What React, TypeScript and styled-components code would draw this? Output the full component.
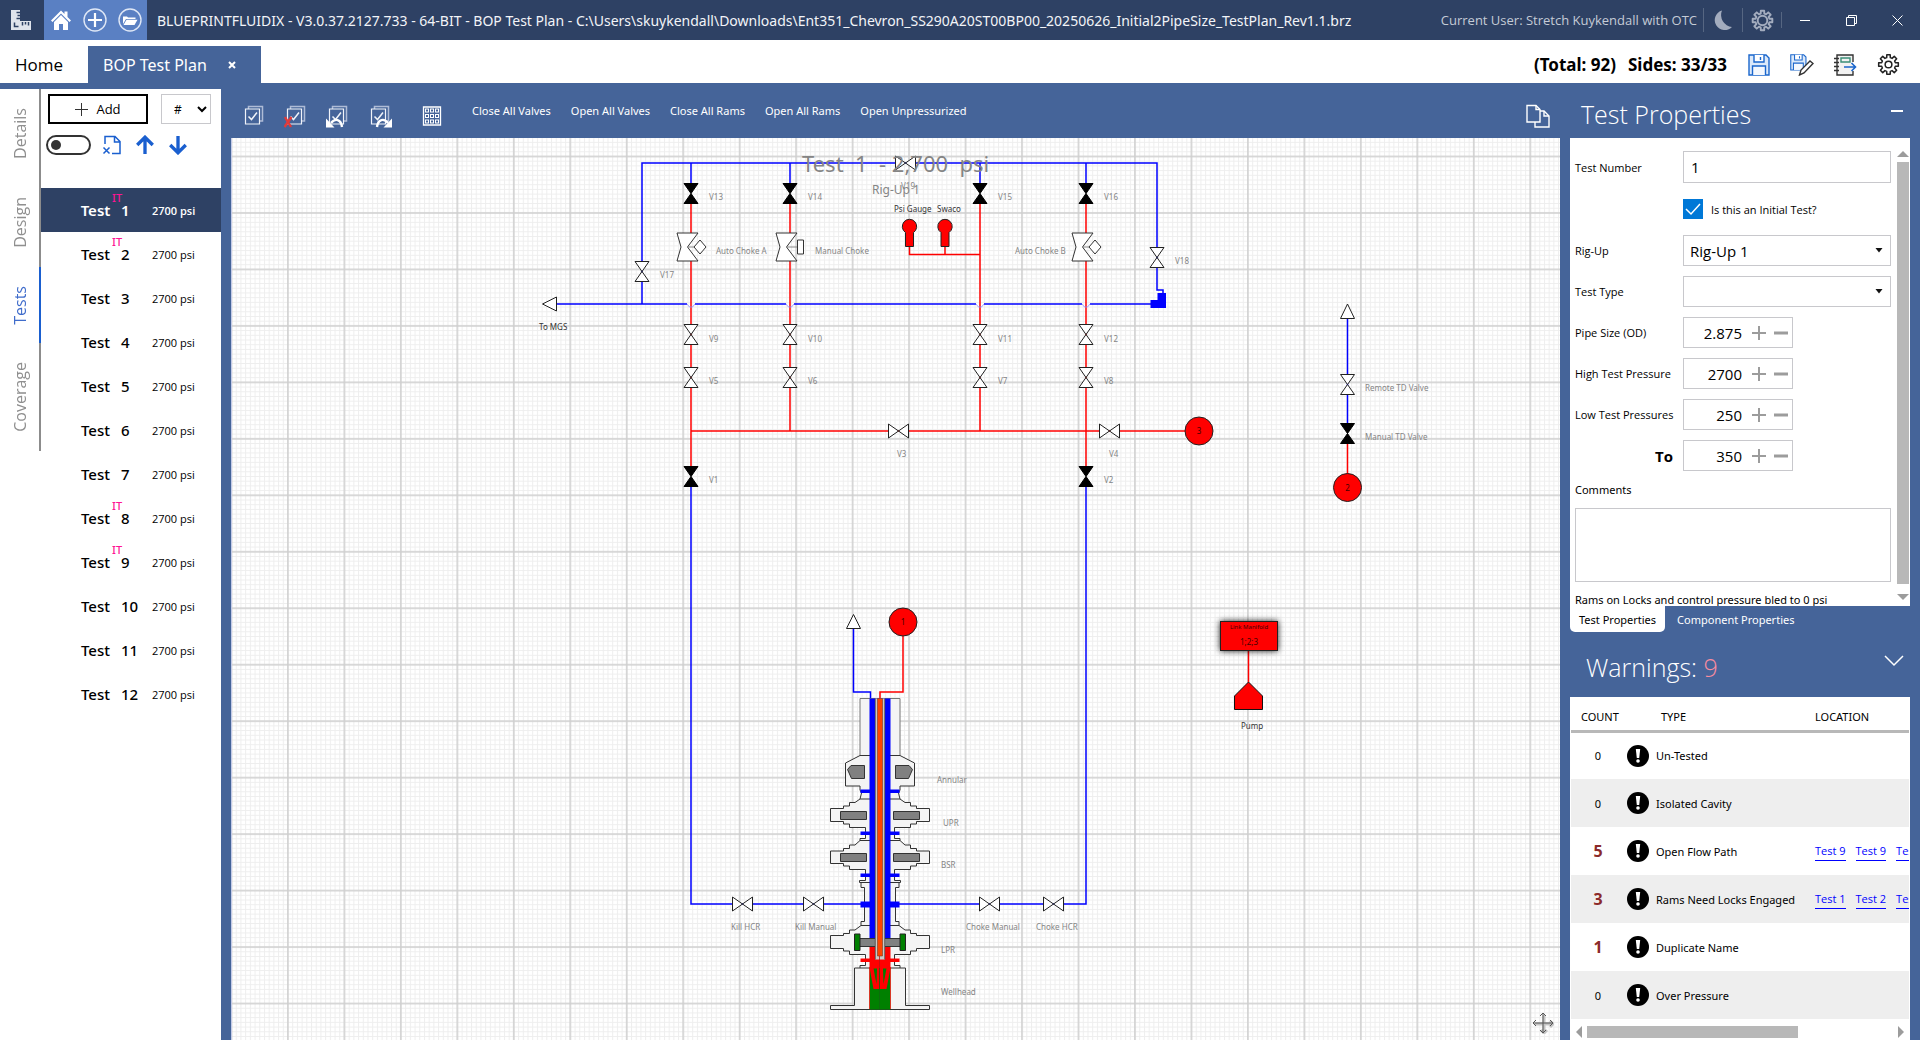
import React, { useState } from "react";
import styled, { createGlobalStyle, css } from "styled-components";

const color = {
  navy: "#2e4164",
  blue: "#456499",
  sky: "#5a80c3",
  action: "#1a5fcf",
  line: "#c8c8cc",
  thumb: "#b8b8b8",
  arrow: "#9c9c9c",
};

const noto = `"Noto Sans", "Open Sans", sans-serif`;

const GlobalStyle = createGlobalStyle`
  * { box-sizing: border-box; }
  body { margin: 0; overflow: hidden; }
  body, button, input, select, textarea {
    font-family: "Open Sans", "Noto Sans", sans-serif;
    font-size: 12px;
    color: #000;
  }
`;

const plainButton = css`
  display: flex;
  align-items: center;
  justify-content: center;
  padding: 0;
  border: 0;
  background: none;
  cursor: pointer;
`;

/* ---------- Shell ---------- */

const Shell = styled.div`
  display: flex;
  flex-direction: column;
  height: 100vh;
  background: ${color.blue};
`;

const TitleBar = styled.header`
  display: flex;
  flex: none;
  align-items: center;
  height: 40px;
  background: ${color.navy};
`;

const Logo = styled.div`
  display: flex;
  width: 44px;
  padding-left: 10px;
`;

const QuickActions = styled.nav`
  display: flex;
  align-items: center;
  justify-content: space-around;
  width: 103px;
  height: 40px;
  background: ${color.sky};
`;

const IconButton = styled.button<{ $size?: number; $wide?: boolean }>`
  ${plainButton}
  width: ${(p) => (p.$wide ? 40 : p.$size ?? 24)}px;
  height: ${(p) => p.$size ?? 24}px;
`;

const WindowTitle = styled.div`
  flex: 1;
  padding-left: 10px;
  color: #f2f4f8;
  font-family: ${noto};
  font-size: 14px;
  white-space: nowrap;
  overflow: hidden;
`;

const UserName = styled.div`
  padding-right: 6px;
  color: #c5cbd6;
  font-size: 13px;
  white-space: nowrap;
`;

const TitleCell = styled.div`
  display: flex;
  justify-content: center;
  width: 39px;
  border-left: 1px solid #566682;
`;

const TitleRule = styled.span`
  width: 1px;
  height: 16px;
  background: #566682;
`;

const WindowButton = styled.button`
  ${plainButton}
  width: 46px;
  height: 40px;
`;

const TabRow = styled.div`
  display: flex;
  flex: none;
  align-items: flex-end;
  height: 43px;
  background: #fff;
`;

const HomeTab = styled.button`
  ${plainButton}
  justify-content: flex-start;
  width: 88px;
  height: 37px;
  padding-left: 15px;
  font-size: 17px;
`;

const PlanTab = styled.div`
  display: flex;
  align-items: center;
  gap: 20px;
  width: 173px;
  height: 37px;
  padding-left: 15px;
  background: ${color.blue};
  color: #fff;
  font-family: ${noto};
  font-size: 16px;
`;

const Totals = styled.div`
  display: flex;
  align-items: center;
  gap: 12px;
  margin-left: auto;
  height: 37px;
  font-family: ${noto};
  font-size: 17px;
  font-weight: 700;
`;

const FileActions = styled.div`
  display: flex;
  align-items: center;
  gap: 19px;
  height: 37px;
  padding: 0 20px;
`;

const Body = styled.div`
  display: flex;
  flex: 1;
  min-height: 0;
`;

/* ---------- Left side ---------- */

const SideNav = styled.nav`
  flex: none;
  width: 41px;
  margin-top: 6px;
  background: #fff;
`;

const NavTab = styled.button<{ $active?: boolean }>`
  ${plainButton}
  width: 41px;
  padding: 19px 0;
  border-right: 2px solid ${(p) => (p.$active ? color.action : "#8c8c8c")};
  color: ${(p) => (p.$active ? "#3f6ccb" : "#8f8f8f")};
  font-size: 16px;
  line-height: 24px;
  writing-mode: vertical-rl;

  span { transform: rotate(180deg); }
`;

const TestPanel = styled.aside`
  flex: none;
  width: 180px;
  margin-top: 6px;
  background: #fff;
`;

const PanelTools = styled.div`
  display: flex;
  align-items: center;
  height: 30px;
  margin: 5px 7px 10px;
  gap: 13px;
`;

const AddButton = styled.button`
  ${plainButton}
  gap: 8px;
  width: 100px;
  height: 30px;
  border: 2px solid #000;
  background: #fff;
  font-size: 13px;
`;

const SelectBox = styled.div<{ $width?: number }>`
  display: flex;
  align-items: center;
  width: ${(p) => (p.$width ? `${p.$width}px` : "100%")};
  height: ${(p) => (p.$width ? 30 : 31)}px;
  border: 1px solid ${color.line};
  background: #fff;

  select {
    flex: 1;
    min-width: 0;
    height: 100%;
    padding: 0 0 0 ${(p) => (p.$width ? 12 : 6)}px;
    border: 0;
    appearance: none;
    background: none;
    font-size: ${(p) => (p.$width ? 12 : 15)}px;
  }

  svg {
    flex: none;
    margin-right: ${(p) => (p.$width ? 3 : 7)}px;
    pointer-events: none;
  }
`;

const PanelIcons = styled.div`
  display: flex;
  align-items: center;
  gap: 9px;
  height: 22px;
  margin: 0 5px 32px;
`;

const Toggle = styled.input`
  appearance: none;
  display: flex;
  align-items: center;
  width: 45px;
  height: 20px;
  margin: 0;
  padding-left: 3px;
  border: 2px solid #333;
  border-radius: 10px;
  background: #fff;

  &::before {
    content: "";
    width: 10px;
    height: 10px;
    border-radius: 50%;
    background: #333;
  }

  &:checked { justify-content: flex-end; padding: 0 3px 0 0; }
`;

const TestList = styled.ul`
  margin: 0;
  padding: 0;
  list-style: none;
`;

const TestItem = styled.button<{ $active: boolean }>`
  ${plainButton}
  justify-content: flex-start;
  width: 180px;
  height: 44px;
  padding-left: 38px;
  background: ${(p) => (p.$active ? color.navy : "#fff")};
  color: ${(p) => (p.$active ? "#fff" : "#000")};
  font-family: ${noto};
  font-weight: ${(p) => (p.$active ? 600 : 500)};
`;

const TestWord = styled.span`
  width: 33px;
  font-size: 15px;
`;

const TestBadge = styled.sup`
  align-self: flex-start;
  width: 9px;
  margin-top: 3px;
  color: #ff1493;
  font-size: 11px;
  font-weight: 500;
  line-height: 14px;
`;

const TestNo = styled.span`
  width: 31px;
  font-size: 15px;
  text-align: left;
`;

const TestPsi = styled.span`
  font-family: "Open Sans", "Noto Sans", sans-serif;
  font-size: 11px;
  white-space: nowrap;
`;

/* ---------- Canvas ---------- */

const Center = styled.main`
  display: flex;
  flex: 1;
  flex-direction: column;
  min-width: 0;
  padding: 0 10px;
`;

const Toolbar = styled.div`
  display: flex;
  flex: none;
  align-items: center;
  gap: 20px;
  height: 55px;
  padding: 0 10px 0 11px;
`;

const ToolIcons = styled.div`
  display: flex;
  gap: 18px;
  padding-top: 10px;
`;

const ToolButton = styled.button`
  ${plainButton}
  height: 24px;
  color: #fff;
  font-family: ${noto};
  font-size: 11px;
  white-space: nowrap;
`;

const ToolEnd = styled.div`
  margin-left: auto;
  padding-top: 10px;
`;

const CanvasArea = styled.section`
  position: relative;
  flex: 1;
  min-height: 0;
  border-left: 1px solid #c3cbe8;
  background: #fff;
  overflow: hidden;
`;

const Drawing = styled.svg`
  display: block;
  width: 100%;
  height: 100%;
  font-family: ${noto};
`;

const PlanTitle = styled.text`
  font-size: 22px;
  font-weight: 400;
  white-space: pre;
`;

const PanHandle = styled.div`
  position: absolute;
  right: 6px;
  bottom: 6px;
  display: flex;
`;

/* ---------- Right side ---------- */

const RightSide = styled.aside`
  display: flex;
  flex: none;
  flex-direction: column;
  width: 350px;
  padding-right: 10px;
`;

const PanelHeading = styled.div<{ $tall?: boolean }>`
  display: flex;
  flex: none;
  align-items: ${(p) => (p.$tall ? "flex-start" : "center")};
  justify-content: space-between;
  height: ${(p) => (p.$tall ? 65 : 55)}px;
  padding: ${(p) => (p.$tall ? "17px 4px 0 16px" : "6px 1px 0 11px")};

  h2 {
    margin: 0;
    color: #fff;
    font-size: 25px;
    font-weight: 300;
    line-height: 36px;
  }

  em {
    color: #f78ca0;
    font-style: normal;
  }
`;

const PropsBox = styled.div`
  display: flex;
  flex: none;
  height: 468px;
  background: #fff;
  overflow: hidden;
`;

const PropsForm = styled.form`
  display: grid;
  flex: 1;
  grid-template-columns: 108px 1fr;
  grid-auto-rows: min-content;
  align-items: center;
  row-gap: 10px;
  padding: 13px 6px 0 5px;
`;

const FieldLabel = styled.label`
  font-size: 11px;
`;

const ToLabel = styled.label`
  padding-right: 10px;
  font-size: 15px;
  font-weight: 700;
  text-align: right;
`;

const TextField = styled.input`
  width: 100%;
  height: 32px;
  padding: 0 7px;
  border: 1px solid ${color.line};
  font-size: 15px;
`;

const CheckLine = styled.div`
  display: flex;
  grid-column: 2;
  align-items: center;
  gap: 8px;
  height: 32px;
`;

const CheckBox = styled.input`
  appearance: none;
  width: 20px;
  height: 20px;
  margin: 0;
  border: 1px solid #0078d7;
  background: #fff;

  &:checked {
    background: #0078d7
      url("data:image/svg+xml,%3Csvg xmlns='http://www.w3.org/2000/svg' viewBox='0 0 18 18'%3E%3Cpath d='M2 9l5 5 9-10' fill='none' stroke='white' stroke-width='1.5'/%3E%3C/svg%3E");
  }
`;

const Spinner = styled.div`
  display: flex;
  align-items: center;
  width: 110px;
  height: 31px;
  border: 1px solid ${color.line};

  input {
    width: 58px;
    height: 100%;
    padding: 0;
    border: 0;
    background: none;
    font-size: 15px;
    text-align: right;
  }

  button {
    ${plainButton}
    width: 22px;
    height: 29px;
  }

  button:first-of-type { margin-left: 6px; }
`;

const Wide = styled.div`
  display: flex;
  flex-direction: column;
  grid-column: 1 / -1;
  gap: 9px;
  font-family: ${noto};
  font-size: 11px;
  line-height: 18px;
`;

const Comments = styled.textarea`
  width: 100%;
  height: 74px;
  border: 1px solid ${color.line};
  resize: none;
`;

const VScroll = styled.div`
  display: flex;
  flex-direction: column;
  align-items: center;
  gap: 5px;
  width: 13px;
  padding: 13px 1px 5px 0;
`;

const VThumb = styled.div`
  width: 12px;
  height: 422px;
  margin-bottom: 5px;
  background: ${color.thumb};
`;

const PageTabs = styled.div`
  display: flex;
  flex: none;
  height: 26px;
`;

const PageTab = styled.button<{ $active?: boolean }>`
  ${plainButton}
  padding: 0 ${(p) => (p.$active ? 9 : 12)}px;
  border-radius: 0 0 5px 5px;
  background: ${(p) => (p.$active ? "#fff" : "none")};
  color: ${(p) => (p.$active ? "#000" : "#fff")};
  font-family: ${noto};
  font-size: 11px;
`;

const WarnBox = styled.div`
  display: flex;
  flex: 1;
  flex-direction: column;
  justify-content: space-between;
  min-height: 0;
  padding: 0 1px;
  background: #fff;
`;

const WarnScroller = styled.div`
  overflow: hidden;
`;

const WarnTable = styled.table`
  width: 420px;
  border-collapse: collapse;
  table-layout: fixed;
  font-family: ${noto};

  thead tr { height: 34px; border-bottom: 3px solid ${color.thumb}; }
  th { padding: 7px 0 0 10px; font-size: 11px; font-weight: 400; text-align: left; }
  th:nth-child(2) { padding-left: 34px; }
  th:nth-child(3) { padding-left: 6px; }
  tbody tr { height: 48px; }
  tbody tr:nth-child(even) { background: #eee; }
  td { padding: 0; font-size: 11px; }
`;

const Count = styled.td<{ $hot: boolean }>`
  && {
    padding-right: 2px;
    text-align: center;
    color: ${(p) => (p.$hot ? "#8b2a2a" : "#000")};
    font-size: ${(p) => (p.$hot ? 16 : 11)}px;
    font-weight: ${(p) => (p.$hot ? 700 : 400)};
  }
`;

const TypeCell = styled.div`
  display: flex;
  align-items: center;
  gap: 7px;
  white-space: nowrap;
`;

const Links = styled.div`
  display: flex;
  gap: 10px;
  padding-left: 6px;

  a {
    border-bottom: 1px solid #0000ff;
    color: #0000ff;
    font-family: "Open Sans", "Noto Sans", sans-serif;
    line-height: 18px;
    text-decoration: none;
    white-space: nowrap;
  }
`;

const HScroll = styled.div`
  display: flex;
  flex: none;
  align-items: center;
  justify-content: space-between;
  height: 16px;
  padding: 0 5px;
`;

const HThumb = styled.div`
  width: 211px;
  height: 12px;
  margin-right: auto;
  margin-left: 5px;
  background: ${color.thumb};
`;

/* ---------- Icons ---------- */

type GearProps = { size: number; stroke: string; width: number; hole: number };

const Gear = ({ size, stroke, width, hole }: GearProps) => {
  const points: string[] = [];
  for (let i = 0; i < 8; i++) {
    const steps: [number, number][] = [[-0.26, 7.4], [-0.17, 10.4], [0.17, 10.4], [0.26, 7.4]];
    steps.forEach(([offset, radius]) => {
      const angle = (i * Math.PI) / 4 + offset;
      points.push(`${(12 + radius * Math.sin(angle)).toFixed(2)},${(12 - radius * Math.cos(angle)).toFixed(2)}`);
    });
  }
  return (
    <svg width={size} height={size} viewBox="0 0 24 24" fill="none" stroke={stroke} strokeWidth={width} strokeLinejoin="round">
      <polygon points={points.join(" ")} />
      <circle cx="12" cy="12" r={hole} />
    </svg>
  );
};

const LogoIcon = () => (
  <svg width="22" height="22" viewBox="0 0 22 22">
    <path d="M1 1h9v11h11v9H1z" fill="#dfe3ec" />
    <path d="M10 3.500H6.500M10 6.500H7.500M10 9.500H6.500M12.500 13v3.500M15.500 13v2.500M18.500 13v3.500M4.500 13.500v4h4" stroke={color.navy} strokeWidth="1.500" fill="none" />
  </svg>
);

const HomeIcon = () => (
  <svg width="22" height="22" viewBox="0 0 22 22">
    <path d="M1 11.500L11 1.500l3.500 3.500V2.500h3V8l3.500 3.500-1.500 1.500L11 4.600 2.500 13z" fill="#fff" />
    <path d="M4 13l7-7 7 7v8h-5v-6H9v6H4z" fill="#fff" />
  </svg>
);

const PlusCircle = () => (
  <svg width="26" height="26" viewBox="0 0 26 26" fill="none" stroke="#fff">
    <circle cx="13" cy="13" r="11" strokeWidth="1.400" stroke="#dfe7f6" />
    <path d="M13 6v14M6 13h14" strokeWidth="2.200" />
  </svg>
);

const FolderCircle = () => (
  <svg width="26" height="26" viewBox="0 0 26 26">
    <circle cx="13" cy="13" r="11" fill="none" strokeWidth="1.400" stroke="#dfe7f6" />
    <path d="M6 17V9.500h4l1 1h7.500v1.500H9z" fill="#fff" />
    <path d="M9.500 12.800h11L17.500 18h-11z" fill="#fff" />
  </svg>
);

const MoonIcon = () => (
  <svg width="20" height="22" viewBox="0 0 20 22">
    <path d="M9 1.500a10 10 0 1 0 10 16.500A12 12 0 0 1 9 1.500z" fill="#a3acbe" />
  </svg>
);

const SaveShape = () => (
  <g fill="#dbe9fa" stroke="#1a66cc" strokeWidth="1.400">
    <path d="M1 1h17l3 3v17H1z" />
    <path d="M6 1v7h10V1M12.500 3v3" fill="#fff" />
    <path d="M4.500 21v-9h13v9" fill="#f4f8fe" />
  </g>
);

const SaveIcon = () => (
  <svg width="22" height="22" viewBox="0 0 22 22"><SaveShape /></svg>
);

const SaveAsIcon = () => (
  <svg width="24" height="22" viewBox="0 0 24 22">
    <g transform="scale(.76)"><SaveShape /></g>
    <path d="M9.500 21l1.500-5L20 7l3 2.500-9 9.500z" fill="#fff" stroke="#333" strokeWidth="1.400" />
  </svg>
);

const ReportIcon = () => (
  <svg width="24" height="22" viewBox="0 0 24 22" fill="none" strokeWidth="1.400">
    <path d="M20 8V1H4v20h16v-4" fill="#f2f2f2" stroke="#333" />
    <path d="M1 4.500h5M1 8.500h5M1 12.500h5M1 16.500h5" stroke="#333" />
    <path d="M8 4h9v4H8z" stroke="#3b8f78" />
    <path d="M11 13h11M18.500 9l4 4-4 4" stroke="#1a66cc" strokeWidth="1.600" />
  </svg>
);

const DocRemove = () => (
  <svg width="20" height="20" viewBox="0 0 20 20" fill="none" stroke={color.action} strokeWidth="1.500">
    <path d="M3 9V1.500h10l5 5V18.500h-8M12.500 1.500V7H18" />
    <path d="M1.500 12.500l6 6M7.500 12.500l-6 6" />
  </svg>
);

const ArrowIcon = ({ down }: { down?: boolean }) => (
  <svg width="20" height="20" viewBox="0 0 18 18">
    <path d="M9 17V3M2 9l7-7 7 7" transform={down ? "rotate(180 9 9)" : undefined} fill="none" stroke={color.action} strokeWidth="3" />
  </svg>
);

const Checks = ({ mark }: { mark?: "clear" | "undo" | "redo" }) => (
  <svg width="24" height="24" viewBox="0 0 24 24" fill="none" stroke="#f0f3f9" strokeWidth="1.200">
    <path d="M6.500 5V2.500H20.500V17H18" stroke="#aebbd6" strokeWidth="1.500" />
    <path d="M3.500 5h14v15h-14z" />
    <path d="M6.500 12.500l3 3 5.500-7" strokeWidth="1.500" />
    {mark === "clear" && <path d="M1 13l6 10M7.500 13L.500 23" stroke="#e03a3a" strokeWidth="2.400" />}
    {mark === "undo" && (
      <g>
        <path d="M5 19c4-5 10-4 11 4" strokeWidth="2.400" stroke="#fff" />
        <path d="M0 14.500v9h8.500z" fill="#fff" stroke="none" />
      </g>
    )}
    {mark === "redo" && (
      <g>
        <path d="M9 23c1-8 7-9 11-4" strokeWidth="2.400" stroke="#fff" />
        <path d="M24 14.500v9h-8.500z" fill="#fff" stroke="none" />
      </g>
    )}
  </svg>
);

const GridIcon = () => (
  <svg width="24" height="24" viewBox="0 0 24 24" fill="none" stroke="#fff">
    <path d="M3.500 3h17v18h-17z" strokeWidth="1.300" />
    {[5.5, 10.5, 15.5].map((x) => [5, 10.5, 16].map((y) => (
      <rect key={`${x}-${y}`} x={x} y={y} width="3" height="3" strokeWidth="1" />
    )))}
  </svg>
);

const CopyIcon = () => (
  <svg width="24" height="24" viewBox="0 0 24 24" fill={color.blue} stroke="#fff" strokeWidth="1.400">
    <path d="M9 7h9l5 5v11H9z" />
    <path d="M18 7v5h5" fill="none" />
    <path d="M1 1.500h9l4 4V18H1z" />
    <path d="M10 1.500v4h4" fill="none" />
  </svg>
);

const Caret = () => (
  <svg width="8" height="5" viewBox="0 0 8 5"><path d="M.500 0h7L4 4.500z" fill="#111" /></svg>
);

const Chevron = () => (
  <svg width="10" height="7" viewBox="0 0 10 7"><path d="M1 1l4 4 4-4" fill="none" stroke="#000" strokeWidth="2" /></svg>
);

const AlertIcon = () => (
  <svg width="22" height="22" viewBox="0 0 22 22">
    <circle cx="11" cy="11" r="11" />
    <path d="M8.800 4h4.400l-1 9H9.800z" fill="#fff" />
    <circle cx="11" cy="16" r="1.800" fill="#fff" />
  </svg>
);

const Plus = () => (
  <svg width="14" height="14" viewBox="0 0 14 14"><path d="M7 0v14M0 7h14" stroke={color.arrow} strokeWidth="2" /></svg>
);

const Minus = () => (
  <svg width="14" height="14" viewBox="0 0 14 14"><path d="M0 7h14" stroke={color.arrow} strokeWidth="3" /></svg>
);

const Triangle = ({ dir }: { dir: "up" | "down" | "left" | "right" }) => {
  const turn = { up: 0, right: 90, down: 180, left: 270 }[dir];
  const box = { up: "0 3 12 6", down: "0 3 12 6", left: "3 0 6 12", right: "3 0 6 12" }[dir];
  const flat = dir === "up" || dir === "down";
  return (
    <svg width={flat ? 12 : 6} height={flat ? 6 : 12} viewBox={box}>
      <path d="M0 9h12L6 3z" transform={`rotate(${turn} 6 6)`} fill={color.arrow} />
    </svg>
  );
};

/* ---------- Plan drawing ---------- */

const RED = "#ff0000";
const BLUE = "#0000ff";
const MAJOR = 56.47;
const MINOR = MAJOR / 12;

type ValveProps = { x: number; y: number; closed?: boolean; flat?: boolean };

const Valve = ({ x, y, closed, flat }: ValveProps) => (
  <path
    d="M-7-10H7L-7 10H7z"
    transform={`translate(${x} ${y})${flat ? " rotate(90)" : ""}`}
    fill={closed ? "#000" : "#fff"}
    stroke={closed ? "#000" : "#222"}
    strokeWidth="1"
    strokeLinejoin="round"
  />
);

const Choke = ({ x, manual }: { x: number; manual?: boolean }) => (
  <g transform={`translate(${x} 247)`} fill="#fff" stroke="#333" strokeWidth="1">
    <path d="M-14-14H7L-3.500 0 7 14H-14L-10 0z" />
    <path d={manual ? "M-3.500 0H7" : "M-3.500 0H3"} stroke="#888" />
    <path d={manual ? "M7.500-7h6V7h-6z" : "M3 0l6-7 6 7-6 7z"} />
  </g>
);

const Gauge = ({ x }: { x: number }) => (
  <path d={`M${x - 4} 246.500v-14a7.200 7.200 0 1 1 8 0v14z`} fill={RED} stroke="#222" strokeWidth="1" />
);

const Port = ({ x, y, n }: { x: number; y: number; n: number }) => (
  <g>
    <circle cx={x} cy={y} r="14" fill={RED} stroke="#222" />
    <text x={x} y={y + 3} fontSize="8" textAnchor="middle" fill="#400">{n}</text>
  </g>
);

const valves: ValveProps[] = [
  ...[691, 790, 980, 1086].flatMap((x) => [
    { x, y: 193.5, closed: true },
    { x, y: 334.5 },
    { x, y: 377.5 },
  ]),
  { x: 642, y: 271.5 },
  { x: 1157, y: 257.5 },
  { x: 691, y: 476.5, closed: true },
  { x: 1086, y: 476.5, closed: true },
  { x: 898.5, y: 431, flat: true },
  { x: 1109.5, y: 431, flat: true },
  { x: 905.5, y: 163, flat: true },
  { x: 1347.5, y: 384.5 },
  { x: 1347.5, y: 433.5, closed: true },
  { x: 742.5, y: 904, flat: true },
  { x: 813.5, y: 904, flat: true },
  { x: 989.5, y: 904, flat: true },
  { x: 1053.5, y: 904, flat: true },
];

type Mark = [string, number, number];

const marks: Mark[] = [
  ["V13", 709, 200], ["V14", 808, 200], ["V15", 998, 200], ["V16", 1104, 200],
  ["V9", 709, 342], ["V10", 808, 342], ["V11", 998, 342], ["V12", 1104, 342],
  ["V5", 709, 384], ["V6", 808, 384], ["V7", 998, 384], ["V8", 1104, 384],
  ["V17", 660, 278], ["V18", 1175, 264], ["V19", 901, 189],
  ["V1", 709, 483], ["V2", 1104, 483], ["V3", 897, 457], ["V4", 1109, 457],
  ["Auto Choke A", 716, 254], ["Manual Choke", 815, 254], ["Auto Choke B", 1015, 254],
  ["Remote TD Valve", 1365, 391], ["Manual TD Valve", 1365, 440],
  ["Kill HCR", 731, 930], ["Kill Manual", 795, 930], ["Choke Manual", 966, 930], ["Choke HCR", 1036, 930],
  ["Annular", 937, 783], ["UPR", 943, 826], ["BSR", 941, 868], ["LPR", 941, 953], ["Wellhead", 941, 995],
];

const darkMarks: Mark[] = [
  ["To MGS", 539, 330], ["Psi Gauge", 894, 212], ["Swaco", 937, 212], ["Pump", 1241, 729],
];

/* Left half of the stack; the right half is its mirror image about x = 880. */
const StackHalf = () => (
  <g>
    <g fill="#f4f4f4" stroke="#333" strokeWidth="1">
      <path d="M880 698.500H860V755.500H880z" stroke="#777" />
      <path d="M880 755.500H860L845.500 763V786H860V790L861.500 793 860 799 855 802.500H849.500V806H843.500V808.500H830.500V821.500H843.500V824H849.500V827.500H865.500V838.500H860V840.500L855 845H849.500V848.500H843.500V851H830.500V863.500H843.500V866H849.500V869.500H865.500V880.500H859.500V882.500H861V887.500H864.500V921.500H861V925.500L855 930H849.500V933.500H843.500V935.500H830.500V948.500H843.500V951H849.500V954.500H865.500V965.500H860V968H854.500V1005.500H830.500V1009.500H880z" />
      <path d="M860 799H870M860 840.500H870M860 882.500H870M861 925.500H870M860 968H870" fill="none" />
      <path d="M864.500 765.500V778.500H851.500L847.500 769.500 851 765.500z" fill="#808080" />
      <path d="M840.500 811.500h26v8h-26zM840.500 853.500h26v8h-26z" fill="#808080" />
    </g>
    <path d="M860.500 789.500h10v3.500h-10zM860.500 831.500h10v3.500h-10zM860.500 873.500h10v3.500h-10zM860.500 901.500h10v6h-10z" fill={BLUE} />
    <path d="M860.500 958.500h10v3.500h-10z" fill={RED} />
    <path d="M869.500 698.500h11v240h-11z" fill={BLUE} />
    <path d="M869.500 946.500h11v22h-11z" fill={RED} />
    <path d="M859.500 938.500H880V946.500H859.500z" fill="#808080" stroke="#333" />
    <path d="M854.500 934h5.500v16.500h-5.500z" fill="#008000" stroke="#222" />
    <path d="M869.500 968h11v41.500h-11z" fill="#008000" />
    <path d="M869.500 967v42" stroke={RED} strokeWidth=".700" />
    <path d="M869.500 967.500H880V989H873.500z" fill={RED} />
    <path d="M873.500 968.500H877L876.500 984z" fill="#008000" />
    <path d="M875 698.500h5V959.500h-5z" fill="#cfc8c4" />
    <path d="M875.300 698.500V959.500" stroke="#444" strokeWidth=".800" />
  </g>
);

const PlanDrawing = () => (
  <Drawing role="img" aria-label="BOP stack and choke manifold">
    <defs>
      <pattern id="minor" width={MINOR} height={MINOR} patternUnits="userSpaceOnUse" x="55.500" y="18">
        <path d={`M.500 0V${MINOR}M0 .500H${MINOR}`} stroke="#eeeeee" strokeWidth="1" />
      </pattern>
      <pattern id="major" width={MAJOR} height={MAJOR} patternUnits="userSpaceOnUse" x="55" y="17.500">
        <path d={`M.900 0V${MAJOR}M0 .900H${MAJOR}`} stroke="#cfcfcf" strokeWidth="1.500" />
      </pattern>
      <filter id="glow" x="-20%" y="-30%" width="140%" height="160%">
        <feDropShadow dx="0" dy="0" stdDeviation="3" floodColor="#000" floodOpacity=".9" />
      </filter>
    </defs>
    <rect width="100%" height="100%" fill="url(#minor)" />
    <rect width="100%" height="100%" fill="url(#major)" />

    <g transform="translate(-232 -138)">
      <g fill="none" stroke={BLUE} strokeWidth="1.500">
        <path d="M642 304V163H1157V290H1163V294" />
        <path d="M691 163V184M790 163V184M980 163V184M1086 163V184" />
        <path d="M557 304H687M695 304H786M794 304H976M984 304H1082M1090 304H1151" />
        <path d="M691 487V904H1086V487" />
        <path d="M1347.500 318V424" />
        <path d="M853.500 628V692H870.500V699" />
      </g>
      <g fill="none" stroke={RED} strokeWidth="1.500">
        <path d="M691 203V233M790 203V233M1086 203V233" />
        <path d="M691 261V467M790 261V431M980 203V431M1086 261V467" />
        <path d="M691 431H1185" />
        <path d="M909.500 247V254.500H980M945 247V254.500" />
        <path d="M1347.500 443V474" />
        <path d="M903 636V692H880V699" />
        <path d="M1248.500 651V682" />
      </g>
      {[691, 790, 980, 1086].map((x) => (
        <path key={x} d={`M${x - 4} 304l2.500 3h3l2.500-3`} fill="none" stroke="#8f8fff" strokeWidth=".800" />
      ))}
      <path d="M1157.500 293H1166V308H1150.500V300H1157.500z" fill={BLUE} />
      <g fill="#fff" stroke="#222">
        <path d="M542.500 304L556.500 297V311z" />
        <path d="M1347.500 304L1354.500 318.500H1340.500z" />
        <path d="M853.500 614.500L860.500 628.500H846.500z" />
      </g>
      <Choke x={691} />
      <Choke x={790} manual />
      <Choke x={1086} />

      {valves.map((v) => <Valve key={`${v.x}-${v.y}`} {...v} />)}
      <g fill="#858585">
        <PlanTitle x="802" y="172">{"Test  1  - 2,700  psi"}</PlanTitle>
        <text x="872" y="194" fontSize="12">Rig-Up 1</text>
      </g>
      <Gauge x={909.5} />
      <Gauge x={945} />
      <Port x={1199} y={431} n={3} />
      <Port x={1347.5} y={487.5} n={2} />
      <Port x={903} y={622} n={1} />

      <g fontSize="8" fill="#858585">
        {marks.map(([label, x, y]) => <text key={label} x={x} y={y}>{label}</text>)}
      </g>
      <g fontSize="8" fill="#333">
        {darkMarks.map(([label, x, y]) => <text key={label} x={x} y={y}>{label}</text>)}
      </g>

      <StackHalf />
      <g transform="translate(1760 0) scale(-1 1)"><StackHalf /></g>
      <path d="M877.500 698.500h5V956h-5z" fill="#ff4500" stroke="#7a3a20" strokeWidth=".600" />

      <rect x="1220.500" y="621.500" width="57" height="29" fill={RED} stroke="#222" filter="url(#glow)" />
      <text x="1249" y="629" fontSize="6" textAnchor="middle" fill="#400">Link Manifold</text>
      <text x="1249" y="645" fontSize="8" textAnchor="middle" fill="#400">1;2;3</text>
      <path d="M1248.500 682L1262.500 696V709.500H1234.500V696z" fill={RED} stroke="#111" />
    </g>
  </Drawing>
);

/* ---------- Data ---------- */

const initialTests = [1, 2, 8, 9];

const warnings = [
  { count: 0, type: "Un-Tested", links: [] },
  { count: 0, type: "Isolated Cavity", links: [] },
  { count: 5, type: "Open Flow Path", links: ["Test 9", "Test 9", "Test 9"] },
  { count: 3, type: "Rams Need Locks Engaged", links: ["Test 1", "Test 2", "Test 8"] },
  { count: 1, type: "Duplicate Name", links: [] },
  { count: 0, type: "Over Pressure", links: [] },
];

const NumberField = ({ id, value }: { id: string; value: string }) => (
  <Spinner>
    <input id={id} defaultValue={value} inputMode="decimal" />
    <button type="button" aria-label="Increase"><Plus /></button>
    <button type="button" aria-label="Decrease"><Minus /></button>
  </Spinner>
);

export default function App() {
  const [active, setActive] = useState(1);

  return (
    <Shell>
      <GlobalStyle />
      <TitleBar>
        <Logo><LogoIcon /></Logo>
        <QuickActions>
          <IconButton aria-label="Home"><HomeIcon /></IconButton>
          <IconButton $size={26} aria-label="New"><PlusCircle /></IconButton>
          <IconButton $size={26} aria-label="Open"><FolderCircle /></IconButton>
        </QuickActions>
        <WindowTitle>
          BLUEPRINTFLUIDIX - V3.0.37.2127.733 - 64-BIT - BOP Test Plan - C:\Users\skuykendall\Downloads\Ent351_Chevron_SS290A20ST00BP00_20250626_Initial2PipeSize_TestPlan_Rev1.1.brz
        </WindowTitle>
        <UserName>Current User: Stretch Kuykendall with OTC</UserName>
        <TitleCell><IconButton aria-label="Dark mode"><MoonIcon /></IconButton></TitleCell>
        <TitleCell><IconButton aria-label="Options"><Gear size={23} stroke="#a3acbe" width={2} hole={5} /></IconButton></TitleCell>
        <TitleRule />
        <WindowButton aria-label="Minimize">
          <svg width="10" height="10"><path d="M0 5.500h10" stroke="#fff" /></svg>
        </WindowButton>
        <WindowButton aria-label="Restore">
          <svg width="11" height="11" fill="none" stroke="#fff"><path d="M.500 2.500h8v8h-8zM2.500 2.500v-2h8v8h-2" /></svg>
        </WindowButton>
        <WindowButton aria-label="Close window">
          <svg width="11" height="11" stroke="#fff"><path d="M.500.500l10 10M10.500.500l-10 10" /></svg>
        </WindowButton>
      </TitleBar>

      <TabRow>
        <HomeTab>Home</HomeTab>
        <PlanTab>
          BOP Test Plan
          <IconButton $size={10} aria-label="Close tab">
            <svg width="8" height="8" stroke="#fff" strokeWidth="2"><path d="M1 1l6 6M7 1l-6 6" /></svg>
          </IconButton>
        </PlanTab>
        <Totals><span>(Total: 92)</span><span>Sides: 33/33</span></Totals>
        <FileActions>
          <IconButton aria-label="Save"><SaveIcon /></IconButton>
          <IconButton aria-label="Save as"><SaveAsIcon /></IconButton>
          <IconButton aria-label="Report"><ReportIcon /></IconButton>
          <IconButton aria-label="Settings"><Gear size={23} stroke="#222" width={1.6} hole={3.5} /></IconButton>
        </FileActions>
      </TabRow>

      <Body>
        <SideNav>
          <NavTab><span>Details</span></NavTab>
          <NavTab><span>Design</span></NavTab>
          <NavTab $active><span>Tests</span></NavTab>
          <NavTab><span>Coverage</span></NavTab>
        </SideNav>

        <TestPanel>
          <PanelTools>
            <AddButton>
              <svg width="13" height="13"><path d="M6.500 0v13M0 6.500h13" stroke="#333" /></svg>
              Add
            </AddButton>
            <SelectBox $width={50}>
              <select aria-label="Sort by"><option>#</option></select>
              <Chevron />
            </SelectBox>
          </PanelTools>
          <PanelIcons>
            <Toggle type="checkbox" role="switch" aria-label="Group tests" />
            <IconButton aria-label="Delete test"><DocRemove /></IconButton>
            <IconButton aria-label="Move up"><ArrowIcon /></IconButton>
            <IconButton aria-label="Move down"><ArrowIcon down /></IconButton>
          </PanelIcons>
          <TestList>
            {Array.from({ length: 12 }, (_, i) => i + 1).map((n) => (
              <li key={n}>
                <TestItem $active={n === active} onClick={() => setActive(n)}>
                  <TestWord>Test</TestWord>
                  <TestBadge>{initialTests.includes(n) ? "IT" : ""}</TestBadge>
                  <TestNo>{n}</TestNo>
                  <TestPsi>2700 psi</TestPsi>
                </TestItem>
              </li>
            ))}
          </TestList>
        </TestPanel>

        <Center>
          <Toolbar>
            <ToolIcons>
              <IconButton aria-label="Select all"><Checks /></IconButton>
              <IconButton aria-label="Clear all"><Checks mark="clear" /></IconButton>
              <IconButton aria-label="Undo"><Checks mark="undo" /></IconButton>
              <IconButton aria-label="Redo"><Checks mark="redo" /></IconButton>
            </ToolIcons>
            <ToolIcons><IconButton $wide aria-label="Grid"><GridIcon /></IconButton></ToolIcons>
            <ToolButton>Close All Valves</ToolButton>
            <ToolButton>Open All Valves</ToolButton>
            <ToolButton>Close All Rams</ToolButton>
            <ToolButton>Open All Rams</ToolButton>
            <ToolButton>Open Unpressurized</ToolButton>
            <ToolEnd><IconButton aria-label="Copy"><CopyIcon /></IconButton></ToolEnd>
          </Toolbar>
          <CanvasArea>
            <PlanDrawing />
            <PanHandle>
              <svg width="22" height="22" viewBox="0 0 22 22" fill="none">
                <path d="M12 3v18M3 12h18M9 18l3 3 3-3M18 9l3 3-3 3" stroke="#c4c4c4" strokeWidth="3" />
                <path d="M11 1v20M1 11h20M8 4l3-3 3 3M4 8l-3 3 3 3M8 18l3 3 3-3M18 8l3 3-3 3" stroke="#555" strokeWidth="1" />
              </svg>
            </PanHandle>
          </CanvasArea>
        </Center>

        <RightSide>
          <PanelHeading>
            <h2>Test Properties</h2>
            <IconButton aria-label="Collapse properties">
              <svg width="12" height="12"><path d="M0 3h12" stroke="#fff" strokeWidth="2" /></svg>
            </IconButton>
          </PanelHeading>
          <PropsBox>
            <PropsForm>
              <FieldLabel htmlFor="number">Test Number</FieldLabel>
              <TextField id="number" defaultValue="1" />
              <CheckLine>
                <CheckBox id="initial" type="checkbox" defaultChecked />
                <FieldLabel htmlFor="initial">Is this an Initial Test?</FieldLabel>
              </CheckLine>
              <FieldLabel htmlFor="rigup">Rig-Up</FieldLabel>
              <SelectBox><select id="rigup"><option>Rig-Up 1</option></select><Caret /></SelectBox>
              <FieldLabel htmlFor="type">Test Type</FieldLabel>
              <SelectBox><select id="type"><option></option></select><Caret /></SelectBox>
              <FieldLabel htmlFor="pipe">Pipe Size (OD)</FieldLabel>
              <NumberField id="pipe" value="2.875" />
              <FieldLabel htmlFor="high">High Test Pressure</FieldLabel>
              <NumberField id="high" value="2700" />
              <FieldLabel htmlFor="low">Low Test Pressures</FieldLabel>
              <NumberField id="low" value="250" />
              <ToLabel htmlFor="to">To</ToLabel>
              <NumberField id="to" value="350" />
              <Wide>
                <label htmlFor="comments">Comments</label>
                <Comments id="comments" />
                <span>Rams on Locks and control pressure bled to 0 psi</span>
              </Wide>
            </PropsForm>
            <VScroll aria-hidden="true">
              <Triangle dir="up" />
              <VThumb />
              <Triangle dir="down" />
            </VScroll>
          </PropsBox>
          <PageTabs>
            <PageTab $active>Test Properties</PageTab>
            <PageTab>Component Properties</PageTab>
          </PageTabs>
          <PanelHeading $tall>
            <h2>Warnings: <em>9</em></h2>
            <IconButton aria-label="Collapse warnings">
              <svg width="20" height="12" fill="none"><path d="M1 1l9 9 9-9" stroke="#fff" strokeWidth="1.500" /></svg>
            </IconButton>
          </PanelHeading>
          <WarnBox>
            <WarnScroller>
              <WarnTable>
                <colgroup>
                  <col style={{ width: 56 }} />
                  <col style={{ width: 182 }} />
                  <col />
                </colgroup>
                <thead>
                  <tr><th>COUNT</th><th>TYPE</th><th>LOCATION</th></tr>
                </thead>
                <tbody>
                  {warnings.map((w) => (
                    <tr key={w.type}>
                      <Count $hot={w.count > 0}>{w.count}</Count>
                      <td><TypeCell><AlertIcon />{w.type}</TypeCell></td>
                      <td>
                        <Links>
                          {w.links.map((label, i) => <a key={i} href="#test">{label}</a>)}
                        </Links>
                      </td>
                    </tr>
                  ))}
                </tbody>
              </WarnTable>
            </WarnScroller>
            <HScroll aria-hidden="true">
              <Triangle dir="left" />
              <HThumb />
              <Triangle dir="right" />
            </HScroll>
          </WarnBox>
        </RightSide>
      </Body>
    </Shell>
  );
}
